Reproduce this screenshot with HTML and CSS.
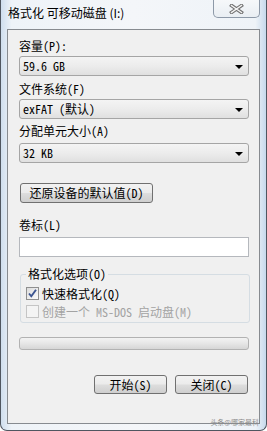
FILE: index.html
```html
<!DOCTYPE html>
<html lang="zh-CN">

<head>
    <meta charset="UTF-8">
    <meta name="viewport" content="width=device-width, initial-scale=1.0">
    <title>格式化 可移动磁盘 (I:)</title>
    <link rel="stylesheet" href="styles.css">
</head>

<body>
    <div class="window">
        <!-- Title bar -->
        <div class="titlebar">
            <span class="title">格式化 可移动磁盘 (I:)</span>
            <div class="close-btn">
                <svg width="15" height="10" viewBox="0 0 15 10">
                    <path d="M2.5 1.5 L12.5 8.5 M12.5 1.5 L2.5 8.5" stroke="#707070" stroke-width="3.4" stroke-linecap="square" fill="none"/>
                    <path d="M2.5 1.5 L12.5 8.5 M12.5 1.5 L2.5 8.5" stroke="#f4f4f4" stroke-width="1.4" stroke-linecap="square" fill="none"/>
                </svg>
            </div>
        </div>

        <!-- Dialog body -->
        <div class="client">
            <div class="label first">容量(P):</div>
            <div class="combo"><span>59.6 GB</span><span class="arrow"></span></div>

            <div class="label l2">文件系统(F)</div>
            <div class="combo"><span>exFAT (默认)</span><span class="arrow"></span></div>

            <div class="label l3">分配单元大小(A)</div>
            <div class="combo c3"><span>32 KB</span><span class="arrow"></span></div>

            <button class="btn restore-btn">还原设备的默认值(D)</button>

            <div class="label l4">卷标(L)</div>
            <div class="textbox"></div>

            <fieldset class="options">
                <legend>格式化选项(O)</legend>
                <div class="check-row">
                    <span class="checkbox checked">
                        <svg width="11" height="11" viewBox="0 0 11 11">
                            <path d="M2 5.5 L4.3 8.3 L9 1.8" stroke="#3b5490" stroke-width="1.9" fill="none"/>
                        </svg>
                    </span>
                    <span>快速格式化(Q)</span>
                </div>
                <div class="check-row disabled">
                    <span class="checkbox"></span>
                    <span>创建一个 MS-DOS 启动盘(M)</span>
                </div>
            </fieldset>

            <div class="progress"></div>

            <div class="actions">
                <button class="btn action-btn">开始(S)</button>
                <button class="btn action-btn">关闭(C)</button>
            </div>

            <span class="watermark">头条@哪家最科</span>
        </div>
    </div>
</body>
</html>
```

FILE: styles.css
```css
body {
    margin: 0;
    font-family: "Noto Sans Mono CJK SC", "Noto Sans CJK SC", monospace;
    font-size: 12px;
    color: #000;
    background-color: #fff;
}

.window {
    width: 267px;
    height: 431px;
    box-sizing: border-box;
    display: flex;
    flex-direction: column;
    padding: 0 6px 6px 6px;
    border: 1px solid #4f5660;
    border-top: none;
    border-radius: 0 0 7px 7px;
    background: linear-gradient(90deg, #cfdeee 0%, #eef3f8 4%, #f4f6f9 50%, #eef3f8 96%, #c6d9ec 100%);
}

.titlebar {
    height: 29px;
    flex-shrink: 0;
    display: flex;
    justify-content: space-between;
    align-items: flex-start;
}

.title {
    font-family: "Noto Sans CJK SC", sans-serif;
    font-size: 12px;
    line-height: 14px;
    margin: 6px 0 0 1px;
}

.close-btn {
    width: 47px;
    height: 18px;
    box-sizing: border-box;
    border: 1px solid #8d99a8;
    border-top: none;
    border-radius: 0 0 5px 5px;
    background: linear-gradient(#f6f8fa, #e9eef3);
    display: flex;
    justify-content: center;
    align-items: center;
}

.client {
    flex: 1;
    position: relative;
    display: flex;
    flex-direction: column;
    border: 1px solid #878b90;
    background-color: #f0f0f0;
    padding: 9px 10px 0 11px;
}

.label {
    line-height: 14px;
    height: 14px;
    white-space: nowrap;
}

.label.l2 {
    margin-top: 6px;
}

.label.l3 {
    margin-top: 5px;
}

.label.l4 {
    margin-top: 15px;
}

.combo {
    height: 20px;
    margin-top: 3px;
    box-sizing: border-box;
    border: 1px solid #a5a5a5;
    border-radius: 3px;
    background: linear-gradient(#f4f4f4 0%, #ececec 50%, #e0e0e0 100%);
    display: flex;
    justify-content: space-between;
    align-items: center;
    padding: 0 5px 0 3px;
    line-height: 14px;
}

.combo.c3 {
    margin-top: 5px;
}

.arrow {
    width: 0;
    height: 0;
    border-left: 4px solid transparent;
    border-right: 4px solid transparent;
    border-top: 4px solid #000;
    margin-top: 2px;
}

.btn {
    font-family: inherit;
    font-size: 12px;
    line-height: 14px;
    color: #000;
    height: 20px;
    box-sizing: border-box;
    padding: 0;
    border: 1px solid #707070;
    border-radius: 3px;
    background: linear-gradient(#f2f2f2 0%, #ebebeb 48%, #dddddd 52%, #cfcfcf 100%);
}

.restore-btn {
    width: 133px;
    margin: 20px 0 0 1px;
}

.textbox {
    height: 20px;
    margin-top: 5px;
    box-sizing: border-box;
    border: 1px solid #b5b8bd;
    background-color: #fff;
}

.options {
    margin: 10px -1px 0 1px;
    padding: 3px 5px 2px 5px;
    border: 1px solid #d5dde3;
    border-radius: 3px;
    min-width: 0;
}

.options legend {
    padding: 0 2px;
    line-height: 14px;
}

.check-row {
    height: 18px;
    display: flex;
    align-items: center;
    gap: 3px;
    white-space: nowrap;
}

.check-row.disabled {
    color: #a3a3a3;
}

.checkbox {
    width: 13px;
    height: 13px;
    box-sizing: border-box;
    border: 1px solid #8f8f8f;
    background: linear-gradient(135deg, #dcdcdc, #fbfbfb);
    display: flex;
    justify-content: center;
    align-items: center;
}

.check-row.disabled .checkbox {
    border-color: #c5c5c5;
    background: #f4f4f4;
}

.progress {
    height: 13px;
    margin-top: 14px;
    box-sizing: border-box;
    border: 1px solid #b2b2b2;
    border-radius: 3px;
    background: linear-gradient(#f3f3f3 0%, #e6e6e6 50%, #d6d6d6 100%);
}

.actions {
    margin-top: 25px;
    display: flex;
    justify-content: flex-end;
    gap: 8px;
    padding-right: 1px;
}

.action-btn {
    width: 73px;
    height: 19px;
}

.watermark {
    position: absolute;
    right: 0;
    bottom: -4px;
    font-family: "Noto Sans CJK SC", sans-serif;
    font-size: 7px;
    line-height: 9px;
    color: #8a8a8a;
}
```
